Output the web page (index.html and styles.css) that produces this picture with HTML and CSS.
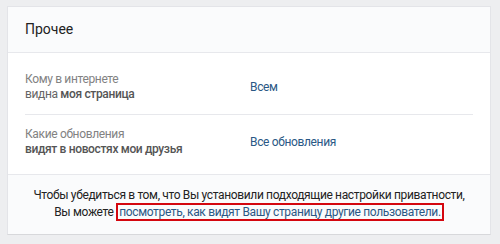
FILE: index.html
```html
<!DOCTYPE html>
<html lang="ru">
<head>
  <meta charset="UTF-8">
  <title>Прочее</title>
  <link rel="stylesheet" href="styles.css">
</head>
<body>

  <div class="page-block">
    <div class="block-header">Прочее</div>

    <div class="settings">
      <div class="settings-row">
        <div class="settings-label">
          Кому в интернете<br>
          <span class="sub">видна <b>моя страница</b></span>
        </div>
        <a class="settings-value" href="#">Всем</a>
      </div>
      <div class="settings-row">
        <div class="settings-label">
          Какие обновления<br>
          <span class="sub"><b>видят в новостях мои друзья</b></span>
        </div>
        <a class="settings-value" href="#">Все обновления</a>
      </div>
    </div>

    <div class="block-footer">
      Чтобы убедиться в том, что Вы установили подходящие настройки приватности,<br>
      Вы можете <a class="marked" href="#">посмотреть, как видят Вашу страницу другие пользователи.</a>
    </div>
  </div>

</body>
</html>
```

FILE: styles.css
```css
body {
  margin: 0;
  padding: 6px 9px 10px 7px;
  background-color: #edeef0;
  font-family: Roboto, "Open Sans", sans-serif;
  font-size: 12px;
  letter-spacing: -0.35px;
  color: #000;
}

a {
  color: #2a5885;
  text-decoration: none;
}

.page-block {
  background-color: #fff;
  border: 1px solid #e3e4e8;
  border-bottom-color: #d7d8db;
}

.block-header {
  height: 45px;
  line-height: 45px;
  padding: 0 17px;
  font-size: 14px;
  letter-spacing: 0;
  color: #222;
  background-color: #fafbfc;
  border-bottom: 1px solid #e7e8ec;
}

.settings {
  padding: 7px 17px 5px;
}

.settings-row {
  display: flex;
  align-items: center;
  padding: 12px 0;
  border-bottom: 1px solid #e7e8ec;
}

.settings-row:last-child {
  border-bottom: none;
}

.settings-label {
  width: 225px;
  line-height: 15px;
  color: #828282;
}

.settings-label .sub {
  color: #656565;
}

.settings-label b {
  font-weight: 500;
  color: #555;
}

.settings-value {
  line-height: 15px;
}

.block-footer {
  padding: 12px 17px 13px;
  text-align: center;
  line-height: 17px;
  color: #222;
  background-color: #fafbfc;
  border-top: 1px solid #e7e8ec;
}

.marked {
  border: 2px solid #d4070f;
  padding: 0 1px;
}
```
